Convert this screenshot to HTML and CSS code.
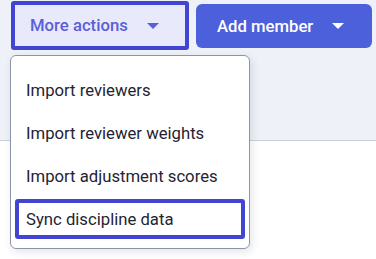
FILE: index.html
```html
<!DOCTYPE html>
<html lang="en">
<head>
    <meta charset="UTF-8">
    <meta name="viewport" content="width=device-width, initial-scale=1.0">
    <title>Members</title>
    <link rel="stylesheet" href="styles.css">
</head>
<body>
    <div class="toolbar">
        <div class="actions">
            <button class="btn btn-secondary">
                More actions
                <span class="caret"></span>
            </button>
            <button class="btn btn-primary">
                Add member
                <span class="caret"></span>
            </button>
        </div>
    </div>

    <ul class="menu">
        <li class="menu-item">Import reviewers</li>
        <li class="menu-item">Import reviewer weights</li>
        <li class="menu-item">Import adjustment scores</li>
        <li class="menu-item focused">Sync discipline data</li>
    </ul>
</body>
</html>
```

FILE: styles.css
```css
body {
    margin: 0;
    font-family: Roboto, "Liberation Sans", Arial, sans-serif;
    background: #fff;
    position: relative;
    height: 259px;
    overflow: hidden;
}
.toolbar {
    height: 140px;
    background: #eef1f7;
    border-bottom: 1px solid #c9d0dc;
}
.actions {
    display: flex;
    align-items: flex-start;
    gap: 7px;
    padding: 1px 0 0 11px;
}
.btn {
    display: flex;
    align-items: center;
    font-family: inherit;
    font-size: 16.7px;
    font-weight: 500;
    cursor: pointer;
}
.btn-secondary {
    width: 178px;
    height: 49px;
    padding: 0 0 0 15px;
    background: #e8e9fa;
    color: #5a5fd8;
    border: 4px solid #4145d1;
    border-radius: 3px;
}
.btn-secondary .caret {
    margin-left: 19px;
}
.btn-primary {
    margin-top: 3px;
    width: 176px;
    height: 44px;
    padding: 0 0 0 21px;
    background: #4d60dc;
    color: #fff;
    border: none;
    border-radius: 6px;
}
.btn-primary .caret {
    margin-left: 19px;
}
.caret {
    width: 0;
    height: 0;
    border-left: 6px solid transparent;
    border-right: 6px solid transparent;
    border-top: 6px solid currentColor;
}
.menu {
    position: absolute;
    left: 10px;
    top: 55px;
    width: 238px;
    margin: 0;
    padding: 14px 0 9px;
    list-style: none;
    background: #fff;
    border: 1px solid #8c95a8;
    border-radius: 6px;
    box-shadow: 2px 3px 8px rgba(30, 40, 60, 0.12);
}
.menu-item {
    height: 40px;
    margin: 0 4px 3px;
    padding-left: 11px;
    display: flex;
    align-items: center;
    font-size: 16.7px;
    color: #1f2433;
    box-sizing: border-box;
}
.menu-item:last-child {
    margin-bottom: 0;
}
.menu-item.focused {
    border: 4px solid #4145d1;
    border-radius: 3px;
    padding-left: 7px;
}
```
